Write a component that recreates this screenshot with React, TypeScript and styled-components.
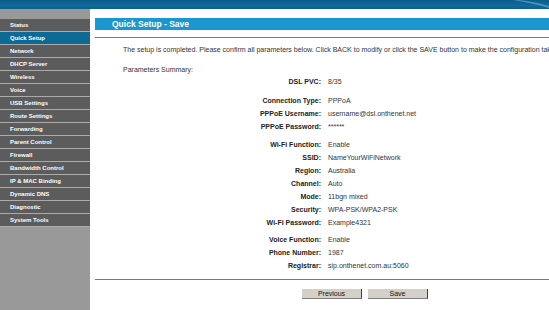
import React from "react";
import styled, { createGlobalStyle } from "styled-components";

const Global = createGlobalStyle`
  html, body { margin: 0; padding: 0; background: #fff; }
  body { font-family: "Liberation Sans", Arial, sans-serif; }
`;

const Page = styled.div`
  width: 549px;
  height: 310px;
  overflow: hidden;
  display: flex;
  flex-direction: column;
`;

const TopBar = styled.div`
  position: relative;
  height: 9px;
  flex: none;
  background: linear-gradient(to bottom, #0b5c88 0%, #106a9c 60%, #0e5f8c 100%);
  overflow: hidden;
`;

const Swoosh = styled.svg`
  position: absolute;
  right: 0;
  top: 0;
`;

const Body = styled.div`
  flex: 1;
  display: flex;
`;

const Sidebar = styled.nav`
  width: 90px;
  flex: none;
  background: #999999;
  padding-top: 10px;
  display: flex;
  flex-direction: column;
`;

const MenuItem = styled.div<{ $active?: boolean }>`
  height: 12px;
  line-height: 12px;
  border-bottom: 1px solid #ababab;
  background: ${(p) => (p.$active ? "#0d6a95" : "#5c5c5c")};
  color: #fff;
  font-weight: bold;
  font-size: 6px;
  padding-left: 10px;
  white-space: nowrap;
`;

const Main = styled.main`
  flex: 1;
  padding: 9px 0 0 5px;
  display: flex;
  flex-direction: column;
  min-width: 0;
  overflow: hidden;
`;

const Heading = styled.div`
  height: 12px;
  line-height: 12px;
  background: #1b96cf;
  color: #fff;
  font-weight: bold;
  font-size: 8.5px;
  padding-left: 17px;
  white-space: nowrap;
`;

const Rule = styled.div<{ $top: number }>`
  margin-top: ${(p) => p.$top}px;
  height: 1px;
  background: #3a8db0;
`;

const Para = styled.div<{ $top: number }>`
  margin-top: ${(p) => p.$top}px;
  padding-left: 28px;
  font-size: 7px;
  line-height: 12px;
  color: #333;
  white-space: nowrap;
`;

const Params = styled.div`
  display: flex;
  flex-direction: column;
  margin-top: -1px;
`;

const Group = styled.div<{ $gap: number }>`
  margin-top: ${(p) => p.$gap}px;
  display: flex;
  flex-direction: column;
`;

const Row = styled.div`
  display: grid;
  grid-template-columns: 226px 1fr;
  column-gap: 7px;
  height: 13px;
  line-height: 13px;
  font-size: 7px;
  white-space: nowrap;
`;

const Label = styled.span`
  text-align: right;
  font-weight: bold;
  color: #222;
`;

const Value = styled.span`
  color: #333;
`;

const Buttons = styled.div`
  margin-top: 9px;
  padding-left: 207px;
  display: flex;
  gap: 6px;
`;

const Button = styled.button`
  width: 60px;
  height: 10px;
  padding: 0;
  margin: 0;
  border: none;
  border-right: 1px solid #404040;
  border-bottom: 1px solid #808080;
  background: #d4d0c8;
  color: #111;
  font-family: "Liberation Sans", Arial, sans-serif;
  font-size: 7px;
  line-height: 9px;
  text-align: center;
`;

const menu = [
  "Status",
  "Quick Setup",
  "Network",
  "DHCP Server",
  "Wireless",
  "Voice",
  "USB Settings",
  "Route Settings",
  "Forwarding",
  "Parent Control",
  "Firewall",
  "Bandwidth Control",
  "IP & MAC Binding",
  "Dynamic DNS",
  "Diagnostic",
  "System Tools",
];

const groups: { gap: number; rows: [string, string][] }[] = [
  { gap: 0, rows: [["DSL PVC:", "8/35"]] },
  {
    gap: 6,
    rows: [
      ["Connection Type:", "PPPoA"],
      ["PPPoE Username:", "username@dsl.onthenet.net"],
      ["PPPoE Password:", "******"],
    ],
  },
  {
    gap: 5,
    rows: [
      ["Wi-Fi Function:", "Enable"],
      ["SSID:", "NameYourWiFiNetwork"],
      ["Region:", "Australia"],
      ["Channel:", "Auto"],
      ["Mode:", "11bgn mixed"],
      ["Security:", "WPA-PSK/WPA2-PSK"],
      ["Wi-Fi Password:", "Example4321"],
    ],
  },
  {
    gap: 4,
    rows: [
      ["Voice Function:", "Enable"],
      ["Phone Number:", "1987"],
      ["Registrar:", "sip.onthenet.com.au:5060"],
    ],
  },
];

export default function App() {
  return (
    <Page>
      <Global />
      <TopBar>
        <Swoosh width="40" height="9" viewBox="0 0 40 9">
          <path d="M4 0 C18 2 30 5 40 8 L40 6 C30 3 20 1 10 0 Z" fill="#5fa8cf" opacity="0.7" />
        </Swoosh>
      </TopBar>
      <Body>
        <Sidebar>
          {menu.map((m) => (
            <MenuItem key={m} $active={m === "Quick Setup"}>
              {m}
            </MenuItem>
          ))}
        </Sidebar>
        <Main>
          <Heading>Quick Setup - Save</Heading>
          <Rule $top={7} />
          <Para $top={6}>
            The setup is completed. Please confirm all parameters below. Click BACK to modify or click the SAVE button to make the configuration take effect.
          </Para>
          <Para $top={8}>Parameters Summary:</Para>
          <Params>
            {groups.map((g, i) => (
              <Group key={i} $gap={g.gap}>
                {g.rows.map(([l, v]) => (
                  <Row key={l}>
                    <Label>{l}</Label>
                    <Value>{v}</Value>
                  </Row>
                ))}
              </Group>
            ))}
          </Params>
          <Rule $top={7} />
          <Buttons>
            <Button>Previous</Button>
            <Button>Save</Button>
          </Buttons>
        </Main>
      </Body>
    </Page>
  );
}
